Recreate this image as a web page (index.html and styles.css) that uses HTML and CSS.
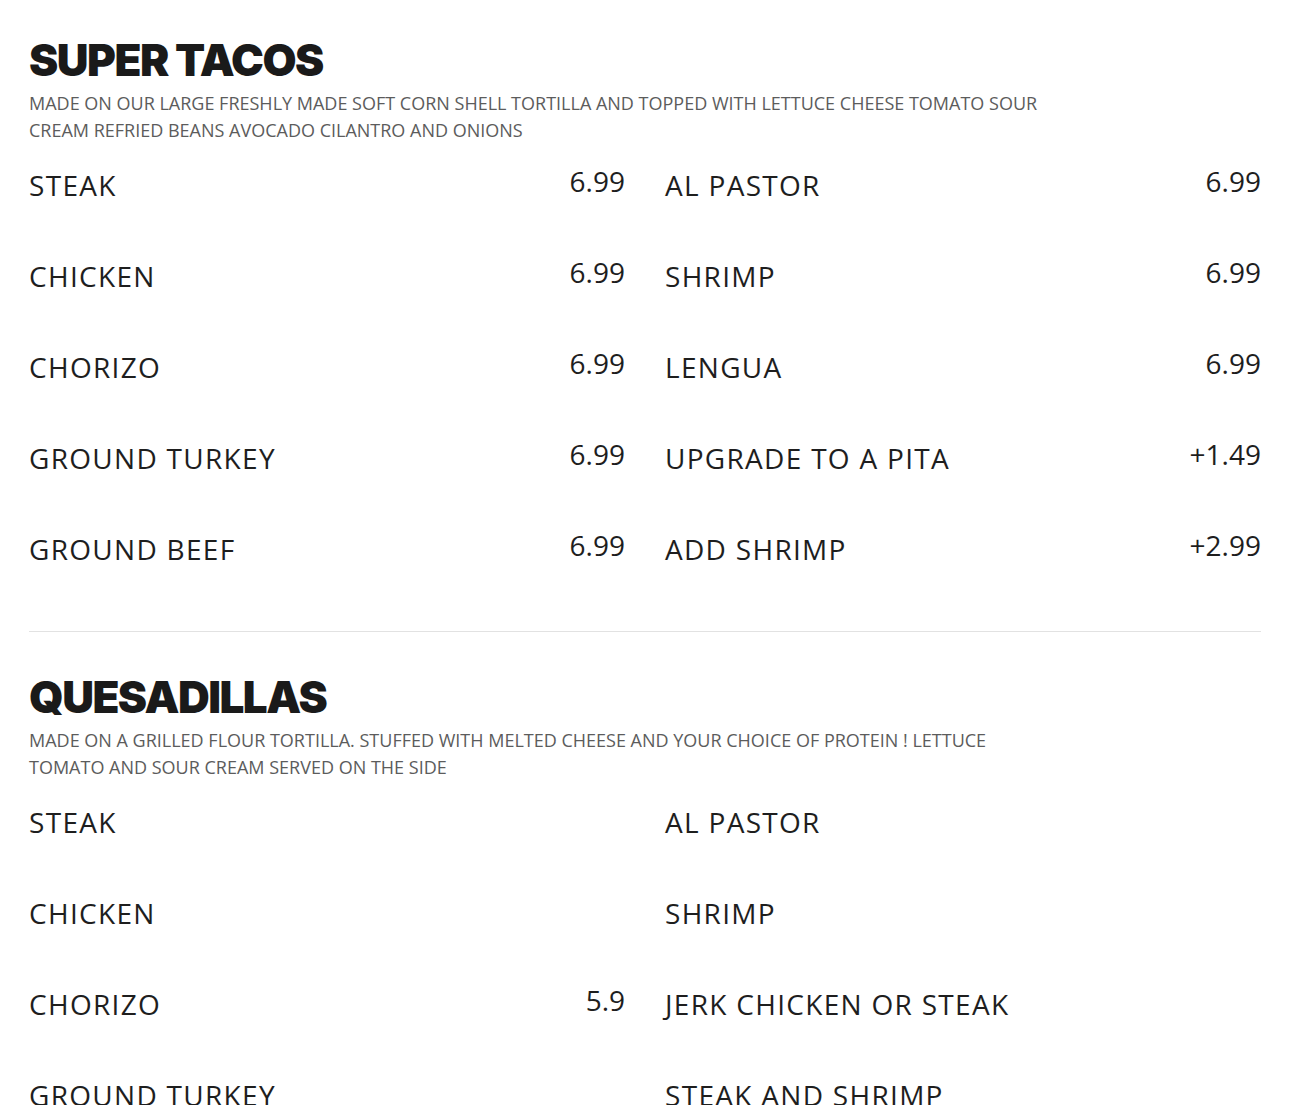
FILE: index.html
```html
<!DOCTYPE html>
<html lang="en">
<head>
<meta charset="utf-8">
<title>Menu</title>
<link rel="stylesheet" href="styles.css">
</head>
<body>
<main class="menu">
  <section class="section">
    <h2 class="section-title">SUPER TACOS</h2>
    <p class="section-desc">MADE ON OUR LARGE FRESHLY MADE SOFT CORN SHELL TORTILLA AND TOPPED WITH LETTUCE CHEESE TOMATO SOUR CREAM REFRIED BEANS AVOCADO CILANTRO AND ONIONS</p>
    <div class="items">
      <div class="item"><span class="name">STEAK</span><span class="price">6.99</span></div>
      <div class="item"><span class="name">AL PASTOR</span><span class="price">6.99</span></div>
      <div class="item"><span class="name">CHICKEN</span><span class="price">6.99</span></div>
      <div class="item"><span class="name">SHRIMP</span><span class="price">6.99</span></div>
      <div class="item"><span class="name">CHORIZO</span><span class="price">6.99</span></div>
      <div class="item"><span class="name">LENGUA</span><span class="price">6.99</span></div>
      <div class="item"><span class="name">GROUND TURKEY</span><span class="price">6.99</span></div>
      <div class="item"><span class="name">UPGRADE TO A PITA</span><span class="price">+1.49</span></div>
      <div class="item"><span class="name">GROUND BEEF</span><span class="price">6.99</span></div>
      <div class="item"><span class="name">ADD SHRIMP</span><span class="price">+2.99</span></div>
    </div>
  </section>
  <hr class="divider">
  <section class="section">
    <h2 class="section-title">QUESADILLAS</h2>
    <p class="section-desc">MADE ON A GRILLED FLOUR TORTILLA. STUFFED WITH MELTED CHEESE AND YOUR CHOICE OF PROTEIN ! LETTUCE TOMATO AND SOUR CREAM SERVED ON THE SIDE</p>
    <div class="items">
      <div class="item"><span class="name">STEAK</span><span class="price"></span></div>
      <div class="item"><span class="name">AL PASTOR</span><span class="price"></span></div>
      <div class="item"><span class="name">CHICKEN</span><span class="price"></span></div>
      <div class="item"><span class="name">SHRIMP</span><span class="price"></span></div>
      <div class="item"><span class="name">CHORIZO</span><span class="price">5.9</span></div>
      <div class="item"><span class="name">JERK CHICKEN OR STEAK</span><span class="price"></span></div>
      <div class="item"><span class="name">GROUND TURKEY</span><span class="price"></span></div>
      <div class="item"><span class="name">STEAK AND SHRIMP</span><span class="price"></span></div>
    </div>
  </section>
</main>
</body>
</html>
```

FILE: styles.css
```css
html, body {
  margin: 0;
  padding: 0;
  background: #ffffff;
}
body {
  font-family: "Open Sans", "Liberation Sans", sans-serif;
  color: #1e1e1e;
}
.menu {
  padding: 32px 29px 0 29px;
}
.section-title {
  margin: 0;
  font-family: Inter, "Liberation Sans", sans-serif;
  font-weight: 900;
  font-size: 44px;
  line-height: 56px;
  letter-spacing: -1.5px;
  color: #1a1a1a;
}
.section-desc {
  margin: 2px 0 0 0;
  max-width: 1020px;
  font-size: 18px;
  line-height: 27px;
  color: #5c5c5c;
}
.items {
  display: grid;
  grid-template-columns: 1fr 1fr;
  column-gap: 40px;
  margin-top: 17px;
}
.item {
  display: flex;
  justify-content: space-between;
  align-items: flex-start;
  height: 91px;
}
.name {
  font-size: 28px;
  line-height: 40px;
  letter-spacing: 1.3px;
  padding-top: 4px;
}
.price {
  font-size: 28px;
  line-height: 40px;
}
.divider {
  border: 0;
  border-top: 1px solid #e2e2e2;
  margin: 15px 0 37px 0;
}
```
